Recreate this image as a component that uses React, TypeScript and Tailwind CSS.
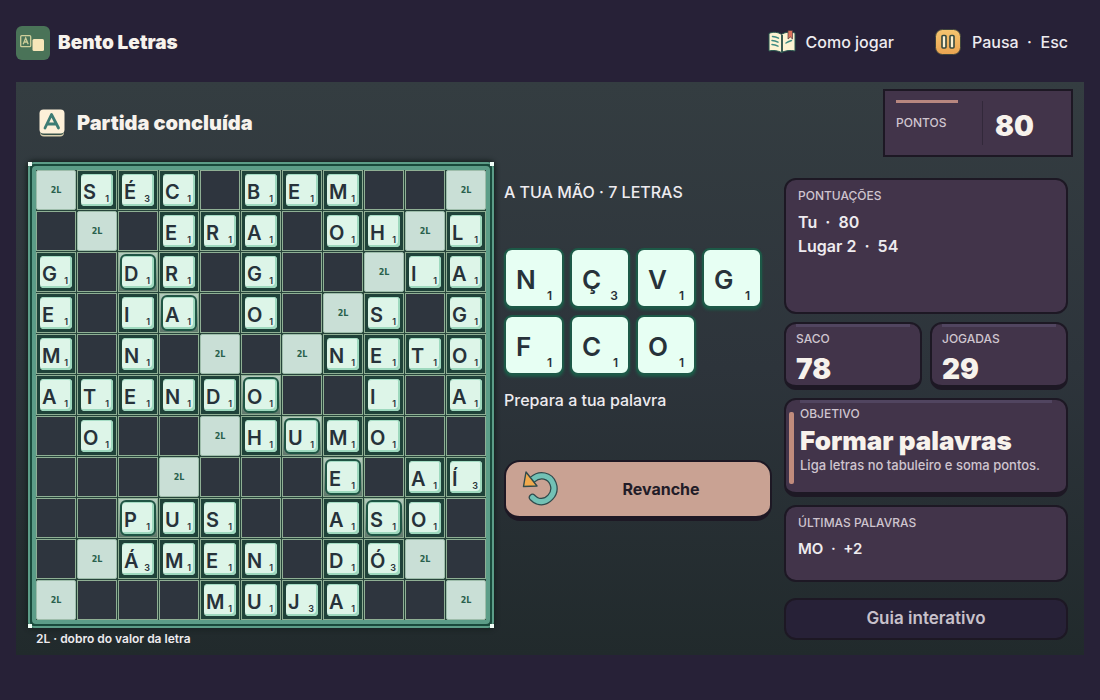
import React from "react";

const BOARD = [
  "2 S É C . B E M . . 2",
  ". 2 . E R A . O H 2 L",
  "G . D* R . G . . 2 I A",
  "E . I A* . O . 2 S . G",
  "M . N . 2 . 2 N E T O",
  "A T E N D O* . . I . A",
  ". O . . 2 H U* M O . .",
  ". . . 2 . . . E* . A Í",
  ". . P* U S . . A S* O .",
  ". 2 Á M E N . D Ó 2 .",
  "2 . . . M U J A . . 2",
].map((row) => row.split(" "));

const HAND = ["N", "Ç", "V", "G", "F", "C", "O"];

const points = (letter: string) => ("ÉÁÍÓÇJ".includes(letter) ? 3 : 1);

const display = "font-['Inter','Noto_Sans',sans-serif] font-black text-[#f7f2ec]";

const BoardCell = ({ value }: { value: string }) => {
  if (value === ".") {
    return <div className="h-10 border border-[#8faf94] bg-[#2e353e]" />;
  }
  if (value === "2") {
    return (
      <div className="flex h-10 items-center justify-center rounded-xs border border-[#9dbdaa] bg-[#c9dfd6] pt-0.5 font-['DejaVu_Sans',sans-serif] text-[8px] font-bold text-[#28614d]">
        2L
      </div>
    );
  }
  const letter = value[0];
  const bonus = value.length > 1;
  return (
    <div
      className={`flex h-10 items-center justify-center border border-[#8faf94] ${
        bonus ? "bg-linear-to-b from-[#b4cbbd] to-[#5f776b]" : "bg-[#1f4239]"
      }`}
    >
      <div
        className={`flex h-8 w-8 items-end justify-between rounded-sm bg-[#ddf5e8] pr-1 pl-0.5 text-[#27323a] shadow-[inset_0_1px_0_#a5dcc4,inset_-2px_-2px_0_#9ed9be] ${
          bonus ? "outline-2 outline-[#1f5544]" : ""
        }`}
      >
        <span className="text-xl leading-7 font-semibold">{letter}</span>
        <span className="text-[9px] leading-3.5 font-semibold">{points(letter)}</span>
      </div>
    </div>
  );
};

const HandTile = ({ letter }: { letter: string }) => (
  <button
    type="button"
    className="flex h-15 items-end justify-between rounded-lg border-2 border-[#1d5947] bg-[#e7fff3] px-2.5 text-[#27323a] shadow-[0_2px_3px_#1d5947]"
  >
    <span className="text-[26px] leading-13 font-semibold">{letter}</span>
    <span className="text-xs leading-5 font-semibold">{points(letter)}</span>
  </button>
);

const Stat = ({ label, value }: { label: string; value: string }) => (
  <section className="h-17 rounded-xl border-2 border-b-5 border-[#1d1824] bg-[#42344a] px-2.5">
    <div className="h-[3px] bg-[#514560]" />
    <h2 className="mt-1 text-xs leading-4 font-medium text-[#cfc5cf]">{label}</h2>
    <p className={`text-[28px] leading-11 ${display}`}>{value}</p>
  </section>
);

const LogoIcon = () => (
  <svg viewBox="0 0 34 34" className="size-[34px]" aria-hidden="true">
    <rect width="34" height="34" rx="6" fill="#4a7358" />
    <rect x="4.7" y="9.7" width="10" height="11" rx="1" fill="none" stroke="#cfcf9b" strokeWidth="1.3" />
    <path d="M7.2 18.2 9.7 12l2.5 6.2M8.1 16h3.2" fill="none" stroke="#cfcf9b" strokeWidth="1.3" />
    <rect x="16.5" y="13" width="11.5" height="12" rx="1.5" fill="#f8e6b9" />
  </svg>
);

const TileIcon = () => (
  <svg viewBox="0 0 26 28" className="h-7 w-[26px]" aria-hidden="true">
    <rect x="1" y="3" width="24" height="24.5" rx="4" fill="#d9cfae" />
    <rect x="1" y="2" width="24" height="24" rx="4" fill="#385249" />
    <rect x="0.5" y="0.5" width="25" height="24" rx="4" fill="#fdf0d8" />
    <path d="M6 19 12.5 5.5 19.5 19M8.5 15h8.5" fill="none" stroke="#3d7c73" strokeWidth="2.8" strokeLinecap="round" strokeLinejoin="round" />
  </svg>
);

const BookIcon = () => (
  <svg viewBox="0 0 28 24" className="h-6 w-7" aria-hidden="true">
    <path d="M1 3.5C5 1.5 10 2 13.5 4.5 17 2 22 1.5 27 3v18c-5-1-9-.5-13.5 1.500C9.500 20.500 5 20 1 21Z" fill="#fdf3d3" stroke="#28584f" strokeWidth="1" strokeLinejoin="round" />
    <path d="M14 5v17" stroke="#234b45" strokeWidth="1.8" />
    <path d="M4.500 6.500c2 .1 4 .6 6 1.600M4 10.500c2 .1 4 .6 6 1.600M4 14.500c2 .1 4 .6 6 1.600M18 13c1.500-1 3.500-1.800 5.500-2.500" fill="none" stroke="#3e8a82" strokeWidth="1.5" strokeLinecap="round" />
    <path d="M20 .5h4.500v8.500l-2.200-2-2.300 2Z" fill="#dd735d" stroke="#493a3d" strokeWidth=".7" />
  </svg>
);

const PauseIcon = () => (
  <svg viewBox="0 0 28 28" className="size-7" aria-hidden="true">
    <defs>
      <linearGradient id="pause" x2="0" y2="1">
        <stop stopColor="#f5c570" />
        <stop offset="1" stopColor="#eba451" />
      </linearGradient>
    </defs>
    <rect x="1.5" y="1.5" width="25" height="25" rx="7" fill="url(#pause)" stroke="#3f443a" />
    <rect x="8" y="7.5" width="4" height="12.5" rx="1" fill="#fdf0cf" stroke="#34483e" strokeWidth="1.6" />
    <rect x="16" y="7.5" width="4" height="12.5" rx="1" fill="#fdf0cf" stroke="#34483e" strokeWidth="1.6" />
  </svg>
);

const RematchIcon = () => (
  <svg viewBox="0 0 36 36" className="size-9" fill="none" aria-hidden="true">
    <path d="M10.500 8.500C18 2 28 4.500 31 12.500c4 10.500-6 20.500-15.500 17.500-2.500-1-4-2.500-5-3.500" stroke="#2f4a4c" strokeWidth="7.500" strokeLinecap="round" />
    <path d="M10.500 8.500C18 2 28 4.500 31 12.500c4 10.500-6 20.500-15.500 17.500-2.500-1-4-2.500-5-3.500" stroke="#72c1b5" strokeWidth="5" strokeLinecap="round" />
    <path d="M4 1 1.500 15.500l13.500-.5Z" fill="#f1aa4d" stroke="#2f4a4c" strokeWidth="1.400" strokeLinejoin="round" />
  </svg>
);

const Corner = ({ className }: { className: string }) => (
  <span className={`absolute size-1 bg-[#f1fff8] ${className}`} />
);

const App = () => {
  return (
    <div className="min-h-screen bg-[#272137] px-4 pb-11 font-['Inter','Noto_Sans',sans-serif] text-[#eeebef]">
      <header className="flex h-[82px] items-center justify-between pt-1">
        <div className="flex items-center gap-2">
          <LogoIcon />
          <h1 className={`text-[19px] ${display}`}>Bento Letras</h1>
        </div>
        <nav className="flex items-center gap-10 pr-4 pb-0.5 font-medium">
          <button type="button" className="flex items-center gap-2.5">
            <BookIcon />
            Como jogar
          </button>
          <button type="button" className="flex items-center gap-2.5">
            <PauseIcon />
            <span className="whitespace-pre">Pausa  ·  Esc</span>
          </button>
        </nav>
      </header>

      <main className="bg-linear-to-b from-[#343d41] via-[#2d343b] to-[#212a2c] pb-2">
        <div className="flex h-20 items-start justify-between pt-[7px] pr-[11px] pl-[23px]">
          <div className="flex items-center gap-3 pt-5">
            <TileIcon />
            <h2 className={`text-xl leading-7 ${display}`}>Partida concluída</h2>
          </div>
          <div className="flex h-17 w-[190px] border-2 border-[#1d1824] bg-[#42344a]">
            <div className="my-2.5 ml-[11px] w-[87px] border-r border-[#32283a]">
              <div className="-mt-px h-[3px] w-[62px] bg-[#b88780]" />
              <p className="mt-3 text-xs leading-4 font-medium text-[#cfc5cf]">PONTOS</p>
            </div>
            <p className={`self-center pt-1.5 pl-3 text-[28px] ${display}`}>80</p>
          </div>
        </div>

        <div className="grid grid-cols-[466px_1fr_284px] pr-4 pl-3">
          <section>
            <div className="relative rounded-md border-2 border-[#5c9d88] bg-[#194a3c] p-0.5 shadow-[0_0_4px_2px_#192322]">
              <div className="grid grid-cols-11 gap-px rounded-sm border-4 border-[#5c9d88] bg-[#26443a]">
                {BOARD.flat().map((value, i) => (
                  <BoardCell key={i} value={value} />
                ))}
              </div>
              <Corner className="-top-0.5 -left-0.5" />
              <Corner className="-top-0.5 -right-0.5" />
              <Corner className="-bottom-0.5 -left-0.5" />
              <Corner className="-right-0.5 -bottom-0.5" />
            </div>
            <p className="mt-[3px] pl-2 text-xs leading-4 font-semibold">2L · dobro do valor da letra</p>
          </section>

          <section className="flex flex-col pt-5 pr-3 pl-2.5">
            <h2 className="leading-5 font-medium">A TUA MÃO · 7 LETRAS</h2>
            <div className="mt-[46px] grid w-[258px] grid-cols-4 gap-x-1.5 gap-y-[7px]">
              {HAND.map((letter) => (
                <HandTile key={letter} letter={letter} />
              ))}
            </div>
            <p className="mt-[15px] leading-5 font-medium">Prepara a tua palavra</p>
            <button
              type="button"
              className="mt-[50px] flex h-[61px] items-center rounded-2xl border-2 border-b-5 border-[#1d1824] bg-[#c9a293] px-4 font-bold text-[#221c28]"
            >
              <RematchIcon />
              <span className="flex-1 pl-2.5">Revanche</span>
            </button>
          </section>

          <aside className="flex flex-col gap-2 pt-4">
            <section className="h-[136px] rounded-xl border-2 border-[#1d1824] bg-[#42344a] px-3 pt-2">
              <h2 className="text-xs leading-4 font-medium text-[#cfc5cf]">PONTUAÇÕES</h2>
              <p className="mt-1.5 leading-6 font-semibold whitespace-pre">Tu  ·  80</p>
              <p className="leading-6 font-semibold whitespace-pre">Lugar 2  ·  54</p>
            </section>
            <div className="grid grid-cols-2 gap-2">
              <Stat label="SACO" value="78" />
              <Stat label="JOGADAS" value="29" />
            </div>
            <section className="flex h-[99px] gap-1.5 rounded-xl border-2 border-b-5 border-[#1d1824] bg-[#42344a] pr-3.5 pl-[3px]">
              <div className="mt-3 h-18 w-[5px] rounded-xs bg-[#c18b7c]" />
              <div className="flex-1">
                <div className="h-[3px] bg-[#514560]" />
                <h2 className="mt-[3px] text-xs leading-4 font-medium text-[#cfc5cf]">OBJETIVO</h2>
                <p className={`mt-[3px] text-[26px] leading-8 ${display}`}>Formar palavras</p>
                <p className="text-[13px] leading-4 font-medium text-[#cfc5cf]">Liga letras no tabuleiro e soma pontos.</p>
              </div>
            </section>
            <section className="h-[77px] rounded-xl border-2 border-[#1d1824] bg-[#42344a] px-3 pt-2">
              <h2 className="text-xs leading-4 font-medium text-[#cfc5cf]">ÚLTIMAS PALAVRAS</h2>
              <p className="mt-2 text-[15px] leading-5 font-semibold whitespace-pre">MO  ·  +2</p>
            </section>
            <button
              type="button"
              className="mt-2 h-[42px] rounded-xl border-2 border-[#1d1824] bg-[#272137] text-[17px] font-semibold text-[#c8c1cb]"
            >
              Guia interativo
            </button>
          </aside>
        </div>
      </main>
    </div>
  );
};

export default App;
